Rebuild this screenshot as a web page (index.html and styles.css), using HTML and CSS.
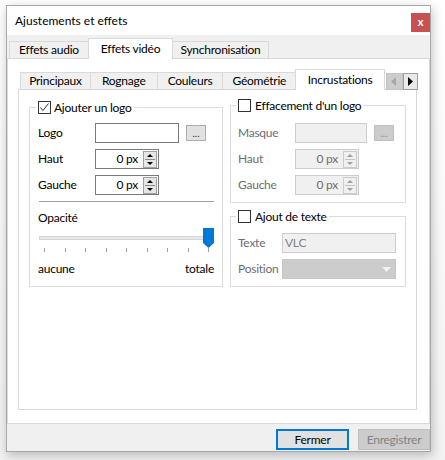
FILE: index.html
```html
<!DOCTYPE html>
<html lang="fr">
<head>
<meta charset="utf-8">
<title>Ajustements et effets</title>
<link rel="stylesheet" href="styles.css">
</head>
<body>
<div class="screen">
  <div class="window">
    <div class="titlebar">
      <span class="title">Ajustements et effets</span>
      <span class="close">x</span>
    </div>
    <div class="body">
      <div class="tabs">
        <div class="tab w-audio">Effets audio</div>
        <div class="tab sel w-video">Effets vidéo</div>
        <div class="tab w-sync">Synchronisation</div>
      </div>
      <div class="pane">
        <div class="subtabs">
          <div class="stab w-princ">Principaux</div>
          <div class="stab w-rogn">Rognage</div>
          <div class="stab w-coul">Couleurs</div>
          <div class="stab w-geom">Géométrie</div>
          <div class="stab sel w-incr">Incrustations</div>
          <div class="scroller">
            <span class="sarrow left-arrow"><svg width="15" height="15" viewBox="0 0 15 15"><path d="M9 3 L4 7.5 L9 12 Z" fill="#a8a8a8"/></svg></span>
            <span class="sarrow right-arrow"><svg width="13" height="15" viewBox="0 0 13 15"><path d="M4 3 L9 7.5 L4 12 Z" fill="#000"/></svg></span>
          </div>
        </div>
        <div class="subpane">
          <fieldset class="group g-logo">
            <legend class="legend">
              <svg class="check" width="13" height="13" viewBox="0 0 13 13"><rect x="0.5" y="0.5" width="12" height="12" fill="#fff" stroke="#333"/><path d="M2.5 6.5 L5 9.5 L10.5 2.5" fill="none" stroke="#333" stroke-width="1"/></svg>
              <span>Ajouter un logo</span>
            </legend>
            <div class="rows">
              <span class="lbl">Logo</span>
              <div class="filerow"><span class="input w-logo"></span><span class="dots">...</span></div>
              <span class="lbl">Haut</span>
              <div class="spin"><span class="val">0 px</span><span class="arrows"><svg width="12" height="15" viewBox="0 0 12 15"><path d="M3 5 L9 5 L6 2 Z" fill="#000"/><path d="M1 7.5 H11" stroke="#8a8a8a" stroke-width="1"/><path d="M3 10 L9 10 L6 13 Z" fill="#000"/></svg></span></div>
              <span class="lbl">Gauche</span>
              <div class="spin"><span class="val">0 px</span><span class="arrows"><svg width="12" height="15" viewBox="0 0 12 15"><path d="M3 5 L9 5 L6 2 Z" fill="#000"/><path d="M1 7.5 H11" stroke="#8a8a8a" stroke-width="1"/><path d="M3 10 L9 10 L6 13 Z" fill="#000"/></svg></span></div>
            </div>
            <div class="sep"></div>
            <div class="opac">Opacité</div>
            <div class="slider">
              <div class="track"></div>
              <svg class="thumb" width="11" height="20" viewBox="0 0 11 20"><path d="M0 0 H11 V15 L5.5 20 L0 15 Z" fill="#0078d7"/></svg>
              <div class="ticks"><i></i><i></i><i></i><i></i><i></i><i></i><i></i><i></i><i></i></div>
            </div>
            <div class="ends"><span>aucune</span><span>totale</span></div>
          </fieldset>
          <div class="col-right">
            <fieldset class="group g-mask">
              <legend class="legend">
                <svg class="check" width="13" height="13" viewBox="0 0 13 13"><rect x="0.5" y="0.5" width="12" height="12" fill="#fff" stroke="#333"/></svg>
                <span>Effacement d'un logo</span>
              </legend>
              <div class="rows">
                <span class="lbl dis">Masque</span>
                <div class="filerow"><span class="input disabled w-mask"></span><span class="dots disabled">...</span></div>
                <span class="lbl dis">Haut</span>
                <div class="spin disabled"><span class="val">0 px</span><span class="arrows"><svg width="12" height="15" viewBox="0 0 12 15"><path d="M3 5 L9 5 L6 2 Z" fill="#a0a0a0"/><path d="M1 7.5 H11" stroke="#c4c4c4" stroke-width="1"/><path d="M3 10 L9 10 L6 13 Z" fill="#a0a0a0"/></svg></span></div>
                <span class="lbl dis">Gauche</span>
                <div class="spin disabled"><span class="val">0 px</span><span class="arrows"><svg width="12" height="15" viewBox="0 0 12 15"><path d="M3 5 L9 5 L6 2 Z" fill="#a0a0a0"/><path d="M1 7.5 H11" stroke="#c4c4c4" stroke-width="1"/><path d="M3 10 L9 10 L6 13 Z" fill="#a0a0a0"/></svg></span></div>
              </div>
            </fieldset>
            <fieldset class="group g-text">
              <legend class="legend">
                <svg class="check" width="13" height="13" viewBox="0 0 13 13"><rect x="0.5" y="0.5" width="12" height="12" fill="#fff" stroke="#333"/></svg>
                <span>Ajout de texte</span>
              </legend>
              <div class="rows narrow">
                <span class="lbl dis">Texte</span>
                <span class="input disabled text-in">VLC</span>
                <span class="lbl dis">Position</span>
                <span class="combo"><svg width="9" height="5" viewBox="0 0 9 5"><path d="M0 0 H9 L4.5 5 Z" fill="#f2f2f2"/></svg></span>
              </div>
            </fieldset>
          </div>
        </div>
      </div>
      <div class="buttons">
        <span class="btn primary">Fermer</span>
        <span class="btn off">Enregistrer</span>
      </div>
    </div>
  </div>
</div>
</body>
</html>
```

FILE: styles.css
```css
* { box-sizing: border-box; }
html, body { margin: 0; padding: 0; }
body {
  background: #f6f6f6;
  font-family: Lato, "Noto Sans", sans-serif;
  font-size: 12px;
  letter-spacing: -0.25px;
  color: #000;
}
.screen {
  width: 445px;
  height: 460px;
  padding: 5px 0 0 6px;
  overflow: hidden;
  background: linear-gradient(#ffffff, #f2f2f2);
}
.window {
  width: 425px;
  height: 447px;
  border: 1px solid #a8a8a8;
  box-shadow: 1px 3px 10px rgba(0, 0, 0, 0.25);
  display: flex;
  flex-direction: column;
  background: #f0f0f0;
}
.titlebar {
  height: 29px;
  background: #fff;
  display: flex;
  justify-content: space-between;
  align-items: flex-start;
}
.title {
  padding-left: 8px;
  line-height: 29px;
  letter-spacing: 0;
}
.close {
  margin-top: 7px;
  width: 19px;
  height: 19px;
  background: #c75050;
  color: #fff;
  font-weight: bold;
  font-size: 11px;
  line-height: 17px;
  text-align: center;
}
.body {
  flex: 1;
  display: flex;
  flex-direction: column;
}
.tabs {
  height: 23px;
  display: flex;
  align-items: flex-end;
  padding-left: 2px;
}
.tab {
  height: 17px;
  border: 1px solid #d9d9d9;
  border-bottom: none;
  background: #f0f0f0;
  text-align: center;
  line-height: 16px;
}
.tab + .tab { margin-left: -1px; }
.tab.sel {
  position: relative;
  height: 21px;
  margin-bottom: -1px;
  background: #fff;
  line-height: 19px;
}
.w-audio { width: 80px; }
.w-video { width: 85px; }
.w-sync { width: 97px; }
.pane {
  height: 366px;
  border: 1px solid #d9d9d9;
  background: #fff;
  padding: 10px 12px 13px 10px;
  display: flex;
  flex-direction: column;
}
.subtabs {
  height: 20px;
  display: flex;
  align-items: flex-end;
  padding-left: 2px;
  margin-right: -1px;
}
.stab {
  height: 17px;
  border: 1px solid #d9d9d9;
  border-bottom: none;
  background: #f0f0f0;
  text-align: center;
  line-height: 16px;
}
.stab + .stab { margin-left: -1px; }
.stab.sel {
  position: relative;
  height: 21px;
  margin-bottom: -1px;
  background: #fff;
  line-height: 19px;
}
.w-princ { width: 71px; }
.w-rogn { width: 68px; }
.w-coul { width: 67px; }
.w-geom { width: 74px; }
.w-incr { width: 90px; }
.scroller {
  display: flex;
  margin-left: 1px;
  position: relative;
  margin-bottom: -1px;
}
.sarrow {
  height: 17px;
  display: flex;
  align-items: center;
  justify-content: center;
}
.left-arrow {
  width: 17px;
  background: #cdcdcd;
  border: 1px solid #c2c2c2;
}
.right-arrow {
  width: 15px;
  background: #e9e9e9;
  border: 1px solid #9e9e9e;
}
.subpane {
  flex: 1;
  border: 1px solid #d9d9d9;
  background: #fff;
  padding: 9px 10px 0 10px;
  display: grid;
  grid-template-columns: 194px 176px;
  column-gap: 7px;
  align-items: start;
}
.group {
  margin: 0;
  min-width: 0;
  border: 1px solid #dcdcdc;
}
.legend {
  padding: 0 2px;
  margin-left: -2px;
  display: flex;
  align-items: center;
  height: 13px;
  line-height: 13px;
}
.check { display: block; margin-right: 3px; }
.g-logo {
  margin-top: 2px;
  padding: 9px 8px 9px 8px;
}
.col-right { display: flex; flex-direction: column; }
.g-mask { padding: 11px 9px 7px 7px; }
.g-text { margin-top: 7px; padding: 10px 9px 7px 7px; }
.g-mask .legend span, .g-text .legend span { margin-left: 1px; }
.rows {
  display: grid;
  grid-template-columns: 57px auto;
  row-gap: 6px;
  align-items: center;
}
.rows.narrow { grid-template-columns: 44px auto; }
.lbl { line-height: 20px; }
.lbl.dis { color: #6d6d6d; }
.filerow {
  display: flex;
  align-items: center;
  gap: 7px;
}
.input {
  display: block;
  height: 20px;
  border: 1px solid #7a7a7a;
  background: #fff;
}
.input.disabled {
  border-color: #cccccc;
  background: #f0f0f0;
}
.w-logo { width: 84px; }
.w-mask { width: 72px; }
.text-in {
  width: 114px;
  color: #838383;
  padding-left: 2px;
  line-height: 18px;
}
.dots {
  width: 20px;
  height: 16px;
  border: 1px solid #adadad;
  background: #e1e1e1;
  font-size: 10px;
  line-height: 15px;
  text-align: center;
  color: #333;
  letter-spacing: 0;
}
.dots.disabled {
  background: #cccccc;
  border-color: #bfbfbf;
  color: #8a8a8a;
}
.spin {
  width: 64px;
  height: 20px;
  border: 1px solid #7a7a7a;
  background: #fff;
  display: flex;
  align-items: center;
  justify-content: flex-end;
  padding-right: 1px;
}
.val { margin-right: 5px; line-height: 18px; }
.arrows {
  width: 14px;
  height: 17px;
  border: 1px solid #a0a0a0;
  background: #e6e6e6;
  display: flex;
  align-items: center;
  justify-content: center;
}
.arrows svg { display: block; }
.spin.disabled {
  border-color: #cccccc;
  background: #f0f0f0;
  color: #6d6d6d;
}
.spin.disabled .arrows {
  border-color: #cccccc;
  background: #f0f0f0;
}
.combo {
  display: flex;
  justify-content: flex-end;
  align-items: center;
  width: 114px;
  height: 20px;
  background: #cccccc;
  border: 1px solid #c6c6c6;
  padding-right: 4px;
}
.combo svg { display: block; }
.sep {
  margin: 6px 0 0 1px;
  height: 1px;
  background: #a0a0a0;
}
.opac {
  margin-top: 8px;
  line-height: 16px;
}
.slider {
  position: relative;
  margin: 2px 0 0 1px;
  height: 25px;
  padding-top: 8px;
  display: flex;
  flex-direction: column;
}
.track {
  height: 4px;
  border: 1px solid #d6d6d6;
  background: #e7e7e7;
}
.thumb {
  position: absolute;
  right: 0;
  top: 0;
  display: block;
}
.ticks {
  margin-top: 8px;
  height: 4px;
  display: flex;
  justify-content: space-between;
  padding: 0 5px;
}
.ticks i {
  width: 1px;
  height: 4px;
  background: #a0a0a0;
}
.ends {
  margin-top: 8px;
  display: flex;
  justify-content: space-between;
  line-height: 16px;
}
.buttons {
  flex: 1;
  display: flex;
  justify-content: flex-end;
  align-items: flex-start;
  padding-top: 5px;
  gap: 9px;
}
.btn {
  height: 21px;
  text-align: center;
  line-height: 17px;
}
.btn.primary {
  width: 73px;
  border: 2px solid #0078d7;
  background: #e1e1e1;
}
.btn.off {
  width: 72px;
  border: 1px solid #bfbfbf;
  background: #cccccc;
  color: #838383;
  line-height: 19px;
}
```
